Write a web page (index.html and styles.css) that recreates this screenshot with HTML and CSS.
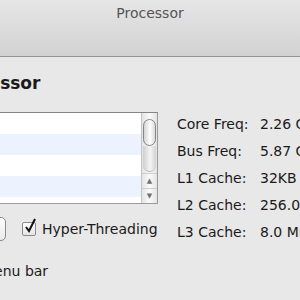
FILE: index.html
```html
<!DOCTYPE html>
<html lang="en">
<head>
  <meta charset="UTF-8">
  <meta name="viewport" content="width=device-width, initial-scale=1.0">
  <title>Processor</title>
  <link rel="stylesheet" href="styles.css">
</head>
<body>

  <div class="window">
    <div class="toolbar">
      <span class="title">Processor</span>
    </div>

    <div class="pane">
      <h1 class="heading">Processor</h1>

      <div class="main">
        <div class="left">
          <!-- core list with aqua scroller -->
          <div class="list">
            <ul class="rows">
              <li></li>
              <li></li>
              <li></li>
              <li></li>
              <li></li>
            </ul>
            <div class="scroller">
              <div class="thumb"></div>
              <div class="track"></div>
              <div class="arrows">
                <span class="arrow">&#9650;</span>
                <span class="arrow">&#9660;</span>
              </div>
            </div>
          </div>

          <div class="controls">
            <button class="push" aria-label="Cores"></button>
            <label class="check">
              <span class="box">
                <svg width="14" height="16" viewBox="0 0 14 16"><path d="M3 9 L6 13 L12 1" fill="none" stroke="#111" stroke-width="2"/></svg>
              </span>
              Hyper-Threading
            </label>
          </div>
        </div>

        <dl class="info">
          <dt>Core Freq:</dt><dd>2.26 GHz</dd>
          <dt>Bus Freq:</dt><dd>5.87 GT/s</dd>
          <dt>L1 Cache:</dt><dd>32KB D / 32KB I</dd>
          <dt>L2 Cache:</dt><dd>256.0 KB</dd>
          <dt>L3 Cache:</dt><dd>8.0 MB</dd>
        </dl>
      </div>

      <p class="menubar">Show in menu bar</p>
    </div>
  </div>

</body>
</html>
```

FILE: styles.css
```css
body {
  margin: 0;
  width: 300px;
  height: 300px;
  overflow: hidden;
  background-color: #e8e8e8;
  font-family: "DejaVu Sans", "Liberation Sans", sans-serif;
  font-size: 14px;
  color: #1a1a1a;
}

.toolbar {
  height: 57px;
  padding-top: 5px;
  box-sizing: border-box;
  background: linear-gradient(#e6e6e6, #d2d2d2);
  border-bottom: 1px solid #939393;
  text-align: center;
  line-height: 16px;
}

.title {
  color: #555555;
}

/* the window is wider than the shot, it starts left of the frame */
.pane {
  margin-left: -100px;
  width: 520px;
}

.heading {
  margin: 0 0 0 46px;
  padding-top: 16px;
  font-size: 17px;
  line-height: 20px;
  font-weight: bold;
}

.main {
  display: flex;
  margin-top: 18px;
}

.left {
  margin-left: 46px;
  width: 212px;
}

.list {
  display: flex;
  height: 92px;
  margin-top: 1px;
  box-sizing: border-box;
  border: 1px solid #9a9a9a;
  border-top-color: #858585;
  background-color: #ffffff;
  overflow: hidden;
}

.rows {
  flex: 1;
  margin: 0;
  padding: 0;
  list-style: none;
}

.rows li {
  height: 21px;
}

.rows li:nth-child(even) {
  background-color: #edf3fe;
}

.scroller {
  display: flex;
  flex-direction: column;
  width: 15px;
  border-left: 1px solid #c4c4c4;
  background: linear-gradient(to right, #e4e4e4, #fafafa 50%, #e4e4e4);
}

.thumb {
  height: 27px;
  margin: 6px 1px 0;
  box-sizing: border-box;
  border: 1px solid #858585;
  border-radius: 7px;
  background: linear-gradient(to right, #d4d4d4, #ffffff 55%, #d9d9d9);
}

.track {
  height: 25px;
  margin: 0 1px;
  border-radius: 0 0 7px 7px;
  background: linear-gradient(to right, #cfcfcf, #f4f4f4 55%, #d2d2d2);
  border-bottom: 1px solid #b0b0b0;
}

.arrows {
  margin-top: auto;
  display: flex;
  flex-direction: column;
}

.arrow {
  height: 14px;
  font-size: 7px;
  line-height: 14px;
  text-align: center;
  color: #707070;
  border-top: 1px solid #cdcdcd;
}

.controls {
  display: flex;
  align-items: center;
  margin-top: 13px;
  height: 24px;
}

.push {
  width: 60px;
  height: 24px;
  padding: 0;
  border: 1px solid #8a8a8a;
  border-radius: 5px;
  background: linear-gradient(#ffffff, #e9e9e9);
}

.check {
  display: flex;
  align-items: center;
  margin-left: 16px;
  white-space: nowrap;
}

.box {
  position: relative;
  width: 14px;
  height: 14px;
  margin-right: 6px;
  box-sizing: border-box;
  border: 1px solid #8a8a8a;
  border-radius: 2px;
  background: linear-gradient(#ffffff, #e4e4e4);
}

/* the tick pokes out over the top of the box */
.box svg {
  position: absolute;
  left: 0;
  top: -5px;
}

.info {
  display: grid;
  grid-template-columns: 83px auto;
  margin: 0 0 0 19px;
  line-height: 27px;
  white-space: nowrap;
}

.info dd {
  margin: 0;
}

.menubar {
  margin: 17px 0 0 21px;
  line-height: 16px;
}
```
